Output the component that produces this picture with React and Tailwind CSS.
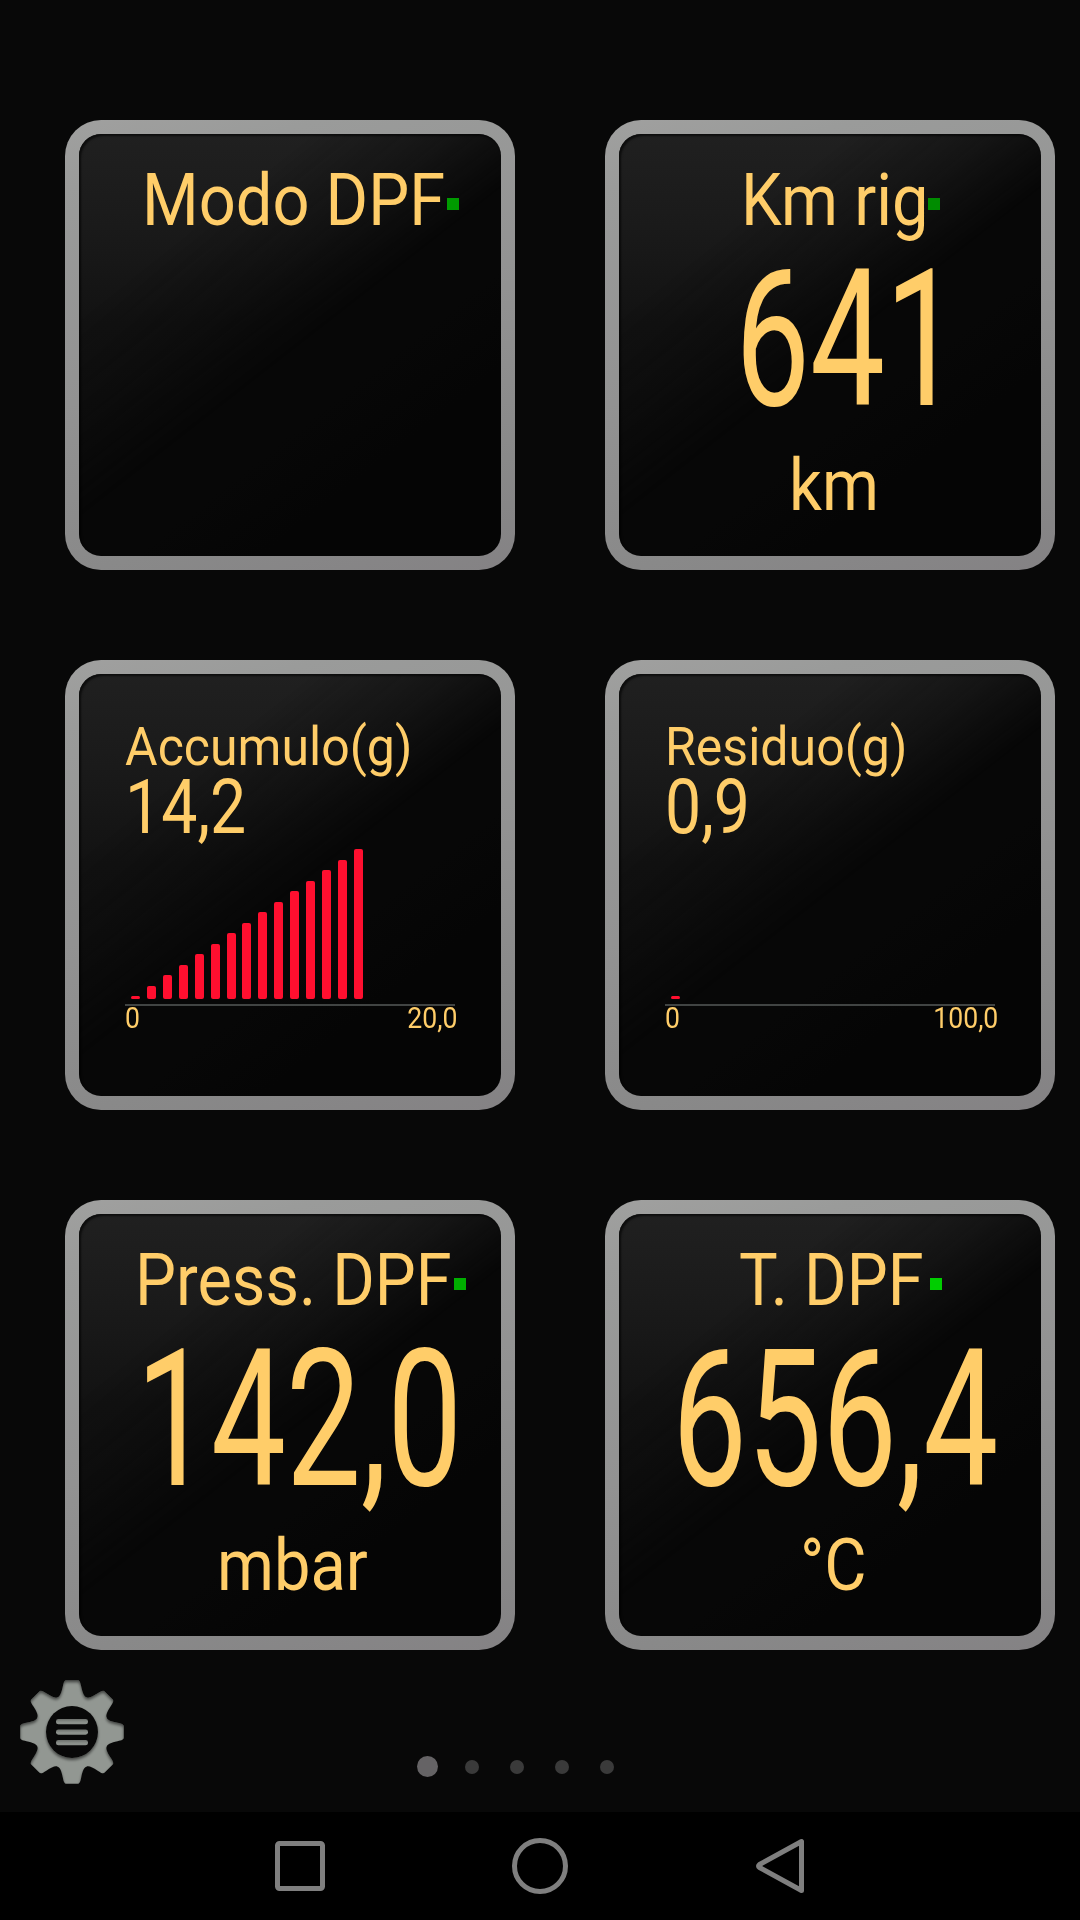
function Tile({ children }) {
  return (
    <section className="h-[450px] w-[450px] rounded-[36px] bg-[linear-gradient(165deg,#a0a09f_0%,#9a9b9a_12%,#929292_50%,#898989_80%,#848284_100%)] p-[14px]">
      <div className="relative h-full overflow-hidden rounded-[22px] bg-[linear-gradient(142deg,#070707_0%,#070707_62%,#050505_75%,#050505_100%)]">
        <div className="pointer-events-none absolute inset-0 bg-[linear-gradient(180deg,#202020_0%,#1a1a1a_22%,#121212_45%,#0e0e0e_80%)] [mask-image:linear-gradient(142deg,black_24%,rgba(0,0,0,0.6)_38%,transparent_51%)]" />
        <div className="pointer-events-none absolute inset-0 rounded-[22px] shadow-[inset_2px_2px_2px_rgba(0,0,0,0.6)]" />
        <div className="relative flex h-full flex-col items-start">{children}</div>
      </div>
    </section>
  );
}

function Gauge({ title, titleX, value, valueX, unit, unitX, led }) {
  return (
    <Tile>
      <span className={`absolute top-[64px] h-3 w-3 ${led}`} />
      <h2 className={`mt-[23px] origin-left scale-x-[0.89] text-[73px] leading-[86px] whitespace-pre ${titleX}`}>{title}</h2>
      {value && (
        <>
          <p className={`origin-left scale-x-[0.695] text-[192px] leading-[193px] whitespace-pre ${valueX}`}>{value}</p>
          <p className={`mt-[6px] origin-left scale-x-[0.89] text-[73px] leading-[86px] whitespace-pre ${unitX}`}>{unit}</p>
        </>
      )}
    </Tile>
  );
}

function BarGauge({ title, value, bars, max, maxX }) {
  return (
    <Tile>
      <div className="ml-[46px] w-[330px] pt-[42.5px]">
        <h2 className="w-max origin-left scale-x-[0.937] text-[53.4px] leading-[60px]">{title}</h2>
        <p className="-mt-px w-max origin-left scale-x-[0.853] text-[75.5px] leading-[62px]">{value}</p>
        <div className="flex h-[161.5px] items-end gap-[6.93px] pl-[6px]">
          {Array.from({ length: bars }, (_, i) => (
            <span key={i} className="w-[9px] shrink-0 rounded-[2px] bg-[#ff0f2f]" style={{ height: 3 + i * 10.5 }} />
          ))}
        </div>
        <div className="mt-[5px] h-[2px] bg-[#414443]" />
        <div className="flex justify-between text-[30px] leading-[24px]">
          <span className="origin-left scale-x-[0.888]">0</span>
          <span className={`origin-right scale-x-[0.888] ${maxX}`}>{max}</span>
        </div>
      </div>
    </Tile>
  );
}

const TOOTH =
  'M-14.6,-34.6 C-12,-35.4 -10.6,-39 -9.2,-45.5 C-8.3,-50 -7.5,-51.8 -5.5,-51.8 L5.5,-51.8 C7.5,-51.8 8.3,-50 9.2,-45.5 C10.6,-39 12,-35.4 14.6,-34.6 L0,0Z';

function SettingsGear() {
  return (
    <svg width="104" height="104" viewBox="-52 -52 104 104" className="block shrink-0">
      <defs>
        <mask id="ring" maskUnits="userSpaceOnUse" x="-52" y="-52" width="104" height="104">
          <rect x="-52" y="-52" width="104" height="104" fill="white" />
          <circle r="26" fill="black" />
        </mask>
        <linearGradient id="bar" x1="0" y1="0" x2="0" y2="1">
          <stop offset="0" stopColor="#6c706c" />
          <stop offset="0.6" stopColor="#8b908b" />
        </linearGradient>
        <filter id="inset" x="-10%" y="-10%" width="120%" height="120%" colorInterpolationFilters="sRGB">
          <feOffset in="SourceAlpha" dy="2" result="moved" />
          <feGaussianBlur in="moved" stdDeviation="1.5" result="soft" />
          <feComposite in="SourceAlpha" in2="soft" operator="out" result="edge" />
          <feComponentTransfer in="edge" result="shade">
            <feFuncA type="linear" slope="0.55" />
          </feComponentTransfer>
          <feMerge>
            <feMergeNode in="SourceGraphic" />
            <feMergeNode in="shade" />
          </feMerge>
        </filter>
      </defs>
      <g fill="#929792" filter="url(#inset)">
        <g mask="url(#ring)">
          <circle r="36" />
          {[0, 45, 90, 135, 180, 225, 270, 315].map((a) => (
            <path key={a} d={TOOTH} transform={`rotate(${a})`} />
          ))}
        </g>
      </g>
      <g fill="url(#bar)">
        <rect x="-16" y="-13" width="32" height="5.3" rx="2.4" />
        <rect x="-16" y="-2.6" width="32" height="5.3" rx="2.4" />
        <rect x="-16" y="8" width="32" height="5.3" rx="2.4" />
      </g>
    </svg>
  );
}

export default function App() {
  return (
    <div className="h-[1920px] w-[1080px] overflow-hidden bg-[#080808] font-['Roboto',sans-serif] text-[#ffcd69]">
      <main className="flex h-[1812px] flex-col">
        <div className="grid grid-cols-[450px_450px] gap-[90px] pt-[120px] pl-[65px]">
          <Gauge title="Modo DPF" titleX="ml-[62.8px]" led="left-[368px] bg-[#009b00]" />
          <Gauge
            title="Km rig"
            titleX="ml-[121.6px]"
            value="641"
            valueX="ml-[116.2px]"
            unit="km"
            unitX="ml-[169.5px]"
            led="left-[309px] bg-[#008c00]"
          />
          <BarGauge title="Accumulo(g)" value="14,2" bars={15} max="20,0" maxX="-mr-[2.5px]" />
          <BarGauge title="Residuo(g)" value="0,9" bars={1} max="100,0" maxX="-mr-[3.5px]" />
          <Gauge
            title="Press. DPF"
            titleX="ml-[55.7px]"
            value="142,0"
            valueX="ml-[56.9px]"
            unit="mbar"
            unitX="ml-[137.5px]"
            led="left-[375px] bg-[#00af00]"
          />
          <Gauge
            title="T. DPF"
            titleX="ml-[120.4px]"
            value="656,4"
            valueX="ml-[52.7px]"
            unit="°C"
            unitX="ml-[180.6px]"
            led="left-[311px] bg-[#00ce00]"
          />
        </div>
        <footer className="flex items-start pt-[30px] pl-5">
          <SettingsGear />
          <div className="mt-[76px] ml-[292.5px] flex items-center">
            <span className="h-[21px] w-[21px] rounded-full bg-[#656365]" />
            <div className="ml-[27.5px] flex gap-[31px]">
              {[1, 2, 3, 4].map((n) => (
                <span key={n} className="h-[14px] w-[14px] rounded-full bg-[#3a3a3a]" />
              ))}
            </div>
          </div>
        </footer>
      </main>
      <nav className="flex h-[108px] items-center justify-center gap-[180px] bg-black">
        <svg width="60" height="60" viewBox="-30 -30 60 60" fill="none" stroke="#7f7f7f" strokeWidth="5">
          <rect x="-22.5" y="-22.5" width="45" height="45" rx="2" />
        </svg>
        <svg width="60" height="60" viewBox="-30 -30 60 60" fill="none" stroke="#7f7f7f" strokeWidth="5">
          <circle r="25.5" />
        </svg>
        <svg width="60" height="60" viewBox="-30 -30 60 60" fill="none" stroke="#7f7f7f" strokeWidth="5" strokeLinejoin="round">
          <path d="M21.5,-24.5 V24.5 L-20.5,1.5 Q-22.5,0 -20.5,-1.5 Z" />
        </svg>
      </nav>
    </div>
  );
}
